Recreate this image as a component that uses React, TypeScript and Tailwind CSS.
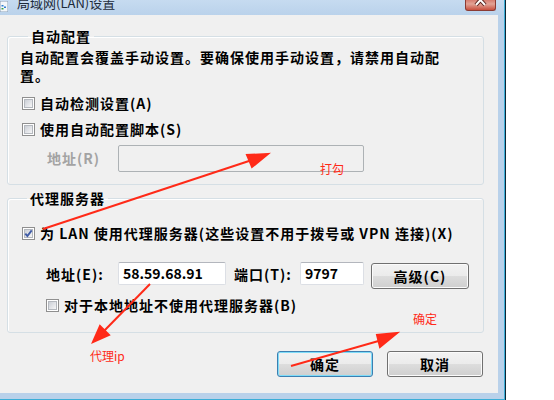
const btn =
  "flex h-[26px] items-center justify-center rounded-[3px] border bg-[linear-gradient(to_bottom,#f2f2f2_0%,#ebebeb_50%,#dddddd_50%,#cfcfcf_100%)] text-[14px] font-bold tracking-[1px] text-black";

function Box({ checked }: { checked?: boolean }) {
  return (
    <span className="relative flex h-[13px] w-[13px] shrink-0 border border-[#8f8f8f] bg-white p-px">
      <span className="flex-1 border border-[#b4b8be] bg-[linear-gradient(135deg,#cbcfd6,#f6f6f7)]" />
      {checked && (
        <svg className="absolute left-0 top-0" width="11" height="11" viewBox="0 0 11 11">
          <path d="M2.3 5.6 L4.4 8 L8.7 2.4" fill="none" stroke="#3f5ba6" strokeWidth="1.9" />
        </svg>
      )}
    </span>
  );
}

function CheckRow({ checked, label, indent }: { checked?: boolean; label: string; indent: string }) {
  return (
    <div className={`flex h-[18px] items-center gap-[5px] ${indent}`}>
      <Box checked={checked} />
      <span className="text-[14px] font-bold leading-[18px] tracking-[1px] whitespace-nowrap">{label}</span>
    </div>
  );
}

export default function App() {
  return (
    <div className="relative h-[400px] w-[554px] overflow-hidden bg-white font-['Noto_Sans_CJK_SC',sans-serif] text-black">
      <div className="flex h-[400px] w-[506px] flex-col border-r border-r-[#0e2636]">
        <div className="flex flex-1 flex-col border-b border-r border-[#3caed7]">
          {/* title bar, top cut off */}
          <div className="flex h-[15px] items-start overflow-hidden bg-[linear-gradient(to_bottom,#c6dbf0,#bad2eb)]">
            <svg width="8" height="11" viewBox="0 0 8 11" className="mt-[1px] shrink-0">
              <rect x="0" y="0" width="8" height="11" fill="#f4f7fa" stroke="#8aa0b8" />
              <rect x="1.5" y="4" width="2" height="1.5" fill="#2d7fd0" />
              <rect x="1.5" y="7" width="2" height="1.5" fill="#3aa04a" />
              <rect x="4" y="5.5" width="2" height="1.5" fill="#2d7fd0" />
            </svg>
            <span className="-mt-[5px] ml-[9px] text-[13px] leading-[16px] text-[#1c2a3a]">局域网(LAN)设置</span>
            <div className="flex-1" />
            <div className="mr-[8px] h-[11px] w-[31px] overflow-hidden rounded-b-[3px] border border-t-0 border-[#8b3b33] bg-[linear-gradient(to_bottom,#d77d70,#e2a396_40%,#c9503f)]">
              <svg width="29" height="10" viewBox="0 0 29 10">
                <path d="M10 -5 L19 5 M19 -5 L10 5" stroke="#5a2620" strokeWidth="4" />
                <path d="M10 -5 L19 5 M19 -5 L10 5" stroke="#ffffff" strokeWidth="2" />
              </svg>
            </div>
          </div>

          <div className="flex flex-1">
            {/* client area */}
            <div className="flex w-[498px] flex-col bg-[#f0f0f0] pl-[7px] pr-[14px] pt-[13px]">
              <fieldset className="rounded-[3px] border border-[#d5dfe5] pb-[12px] pl-[12px] shadow-[inset_1px_1px_0_#ffffff]">
                <legend className="ml-[8px] px-[3px] text-[14px] font-bold leading-[16px] tracking-[1px]">自动配置</legend>
                <p className="mt-[4px] text-[14px] font-bold leading-[18px] tracking-[1px] whitespace-nowrap">
                  自动配置会覆盖手动设置。要确保使用手动设置，请禁用自动配
                  <br />
                  置。
                </p>
                <div className="mt-[10px]">
                  <CheckRow label="自动检测设置(A)" indent="ml-[2px]" />
                </div>
                <div className="mt-[8px]">
                  <CheckRow label="使用自动配置脚本(S)" indent="ml-[2px]" />
                </div>
                <div className="mt-[7px] flex items-center">
                  <span className="ml-[27px] w-[71px] text-[14px] font-bold tracking-[1px] text-[#a3a3a3]">地址(R)</span>
                  <div className="h-[27px] w-[246px] rounded-[2px] border border-[#adb2b5] bg-[#f0f0f0]" />
                </div>
              </fieldset>

              <fieldset className="mt-[5px] rounded-[3px] border border-[#d5dfe5] pb-[18px] pl-[12px] shadow-[inset_1px_1px_0_#ffffff]">
                <legend className="ml-[7px] px-[3px] text-[14px] font-bold leading-[16px] tracking-[1px]">代理服务器</legend>
                <div className="mt-[18px]">
                  <CheckRow checked label="为 LAN 使用代理服务器(这些设置不用于拨号或 VPN 连接)(X)" indent="ml-[2px]" />
                </div>
                <div className="mt-[20px] flex items-start">
                  <span className="ml-[26px] w-[72px] text-[14px] font-bold leading-[24px] tracking-[1px]">地址(E):</span>
                  <div className="h-[23px] w-[108px] rounded-[2px] border border-[#dcdfe5] border-t-[#b3b6bd] bg-white pl-[4px] text-[14px] font-bold leading-[21px]">
                    58.59.68.91
                  </div>
                  <span className="ml-[8px] w-[66px] text-[14px] font-bold leading-[24px] tracking-[1px]">端口(T):</span>
                  <div className="h-[23px] w-[64px] rounded-[2px] border border-[#dcdfe5] border-t-[#b3b6bd] bg-white pl-[4px] text-[14px] font-bold leading-[21px]">
                    9797
                  </div>
                  <div className={`${btn} ml-[7px] mt-px w-[98px] border-[#707070] shadow-[inset_0_0_0_1px_#fbfbfb]`}>高级(C)</div>
                </div>
                <div className="mt-[7px]">
                  <CheckRow label="对于本地地址不使用代理服务器(B)" indent="ml-[26px]" />
                </div>
              </fieldset>

              <div className="mr-px mt-[18px] flex justify-end gap-[14px]">
                <div className={`${btn} w-[96px] border-[#3c7fb1] shadow-[inset_0_0_0_1px_#7fdcf8]`}>确定</div>
                <div className={`${btn} w-[96px] border-[#707070] shadow-[inset_0_0_0_1px_#fbfbfb]`}>取消</div>
              </div>
            </div>
            <div className="w-[6px] bg-[#b9d1ea]" />
          </div>
          <div className="h-[6px] bg-[#b9d1ea]" />
        </div>
      </div>

      {/* red annotations drawn over the dialog */}
      <svg className="pointer-events-none absolute left-0 top-0" width="554" height="400" viewBox="0 0 554 400">
        <g stroke="#ff2a18" strokeWidth="2" fill="#ff2a18">
          <line x1="43" y1="229" x2="252" y2="160" />
          <polygon points="268,154 247,155 252,167" />
          <line x1="150" y1="284" x2="104" y2="331" />
          <polygon points="93,342 100,326 109,335" />
          <line x1="291" y1="366" x2="382" y2="340" />
          <polygon points="397,333 377,335 380,347" />
        </g>
      </svg>
      <span className="absolute left-[320px] top-[162px] text-[12px] leading-[14px] text-[#ff2a18]">打勾</span>
      <span className="absolute left-[90px] top-[349px] text-[12px] leading-[14px] text-[#ff2a18]">代理ip</span>
      <span className="absolute left-[413px] top-[312px] text-[12px] leading-[14px] text-[#ff2a18]">确定</span>
    </div>
  );
}
